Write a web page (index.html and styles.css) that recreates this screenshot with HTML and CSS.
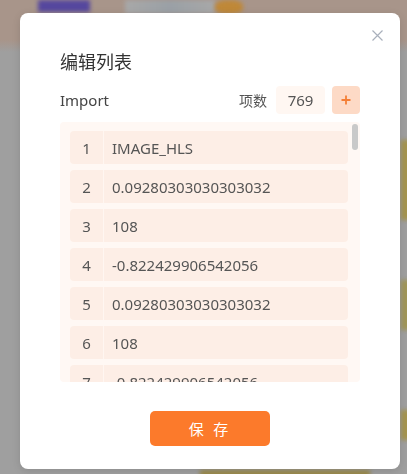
FILE: index.html
```html
<!DOCTYPE html>
<html lang="zh-CN">
<head>
    <meta charset="UTF-8">
    <meta name="viewport" content="width=device-width, initial-scale=1.0">
    <title>编辑列表</title>
    <link rel="stylesheet" href="styles.css">
</head>
<body>
    <div class="backdrop">
        <div class="blob purple"></div>
        <div class="blob gray"></div>
        <div class="blob orange"></div>
        <div class="blob yellow-a"></div>
        <div class="blob yellow-b"></div>
        <div class="blob yellow-c"></div>
        <div class="blob yellow-d"></div>
    </div>

    <div class="modal">
        <button class="close" aria-label="关闭">
            <svg width="11" height="11" viewBox="0 0 11 11">
                <path d="M0.5 0.5 L10.5 10.5 M10.5 0.5 L0.5 10.5" stroke="#a9b0bc" stroke-width="1.2" fill="none"/>
            </svg>
        </button>

        <h2 class="title">编辑列表</h2>

        <div class="toolbar">
            <span class="name">Import</span>
            <div class="count">
                <span class="count-label">项数</span>
                <span class="count-value">769</span>
                <button class="add" aria-label="添加">
                    <svg width="10" height="10" viewBox="0 0 10 10">
                        <path d="M5 0.5 V9.5 M0.5 5 H9.5" stroke="#f47f36" stroke-width="1.8" fill="none"/>
                    </svg>
                </button>
            </div>
        </div>

        <div class="list">
            <ul class="rows">
                <li><span class="idx">1</span><span class="val">IMAGE_HLS</span></li>
                <li><span class="idx">2</span><span class="val">0.09280303030303032</span></li>
                <li><span class="idx">3</span><span class="val">108</span></li>
                <li><span class="idx">4</span><span class="val">-0.822429906542056</span></li>
                <li><span class="idx">5</span><span class="val">0.09280303030303032</span></li>
                <li><span class="idx">6</span><span class="val">108</span></li>
                <li><span class="idx">7</span><span class="val">-0.822429906542056</span></li>
            </ul>
            <span class="thumb"></span>
        </div>

        <div class="footer">
            <button class="save">保 存</button>
        </div>
    </div>
</body>
</html>
```

FILE: styles.css
```css
body {
    margin: 0;
    padding: 13px 7px 0 20px;
    height: 474px;
    box-sizing: border-box;
    overflow: hidden;
    background-color: #9f9f9f;
    font-family: "Noto Sans", "Noto Sans CJK SC", sans-serif;
}

.backdrop {
    position: fixed;
    top: 0;
    left: 0;
    width: 407px;
    height: 474px;
    overflow: hidden;
    background: linear-gradient(to bottom, #a8958a 0, #a8958a 40px, #9f9f9f 52px);
}

.blob {
    position: absolute;
    filter: blur(2px);
}

.purple {
    left: 38px;
    top: 0;
    width: 52px;
    height: 12px;
    background-color: #55479e;
}

.gray {
    left: 125px;
    top: 0;
    width: 90px;
    height: 14px;
    background: linear-gradient(to right, #a8a8a8, #9aa0a6 50%, #a8a8a8);
}

.orange {
    left: 215px;
    top: 0;
    width: 28px;
    height: 14px;
    border-radius: 40%;
    background-color: #bf8838;
}

.yellow-a {
    left: 401px;
    top: 140px;
    width: 14px;
    height: 80px;
    background-color: #a4944e;
}

.yellow-b {
    left: 401px;
    top: 280px;
    width: 14px;
    height: 50px;
    background-color: #a09658;
}

.yellow-c {
    left: 401px;
    top: 410px;
    width: 14px;
    height: 30px;
    background-color: #a4944e;
}

.yellow-d {
    left: 200px;
    top: 470px;
    width: 170px;
    height: 10px;
    background-color: #9a8a4a;
}

.modal {
    position: relative;
    width: 380px;
    box-sizing: border-box;
    padding: 0 40px 23px;
    background-color: #fff;
    border-radius: 8px;
    box-shadow: 0 2px 8px rgba(0, 0, 0, 0.12);
}

.close {
    position: absolute;
    top: 17px;
    right: 17px;
    padding: 0;
    border: none;
    background: none;
    line-height: 0;
    cursor: pointer;
}

.title {
    margin: 0;
    padding-top: 36px;
    font-size: 18px;
    line-height: 26px;
    font-weight: normal;
    color: #333;
}

.toolbar {
    display: flex;
    justify-content: space-between;
    align-items: center;
    height: 28px;
    margin-top: 11px;
}

.name {
    font-size: 15px;
    color: #444;
}

.count {
    display: flex;
    align-items: center;
}

.count-label {
    font-size: 14px;
    color: #555;
    margin-right: 9px;
}

.count-value {
    width: 49px;
    height: 28px;
    line-height: 28px;
    text-align: center;
    font-size: 15px;
    color: #555;
    background-color: #fff7f2;
    border-radius: 4px;
}

.add {
    width: 28px;
    height: 28px;
    margin-left: 7px;
    padding: 0;
    border: none;
    border-radius: 4px;
    background-color: #fddac6;
    line-height: 0;
    cursor: pointer;
}

.list {
    position: relative;
    height: 260px;
    margin-top: 8px;
    padding: 9px 12px 0 10px;
    box-sizing: border-box;
    overflow: hidden;
    background-color: #fff8f4;
    border-radius: 4px;
}

.rows {
    list-style: none;
    margin: 0;
    padding: 0;
    display: flex;
    flex-direction: column;
    gap: 6px;
}

.rows li {
    display: flex;
    align-items: center;
    flex-shrink: 0;
    height: 33px;
    background-color: #fdeee6;
    border-radius: 4px;
    font-size: 15px;
    color: #555;
}

.idx {
    width: 33px;
    height: 100%;
    display: flex;
    align-items: center;
    justify-content: center;
    border-right: 1px solid #fff6f1;
}

.val {
    padding-left: 8px;
}

.thumb {
    position: absolute;
    top: 2px;
    right: 2px;
    width: 6px;
    height: 26px;
    border-radius: 3px;
    background-color: #c9c9c9;
}

.footer {
    display: flex;
    justify-content: center;
    margin-top: 29px;
}

.save {
    width: 120px;
    height: 35px;
    border: none;
    border-radius: 5px;
    background-color: #fc7a2b;
    color: #fff;
    font-family: "Noto Sans CJK SC", sans-serif;
    font-size: 15px;
    letter-spacing: 3px;
    cursor: pointer;
}
```
